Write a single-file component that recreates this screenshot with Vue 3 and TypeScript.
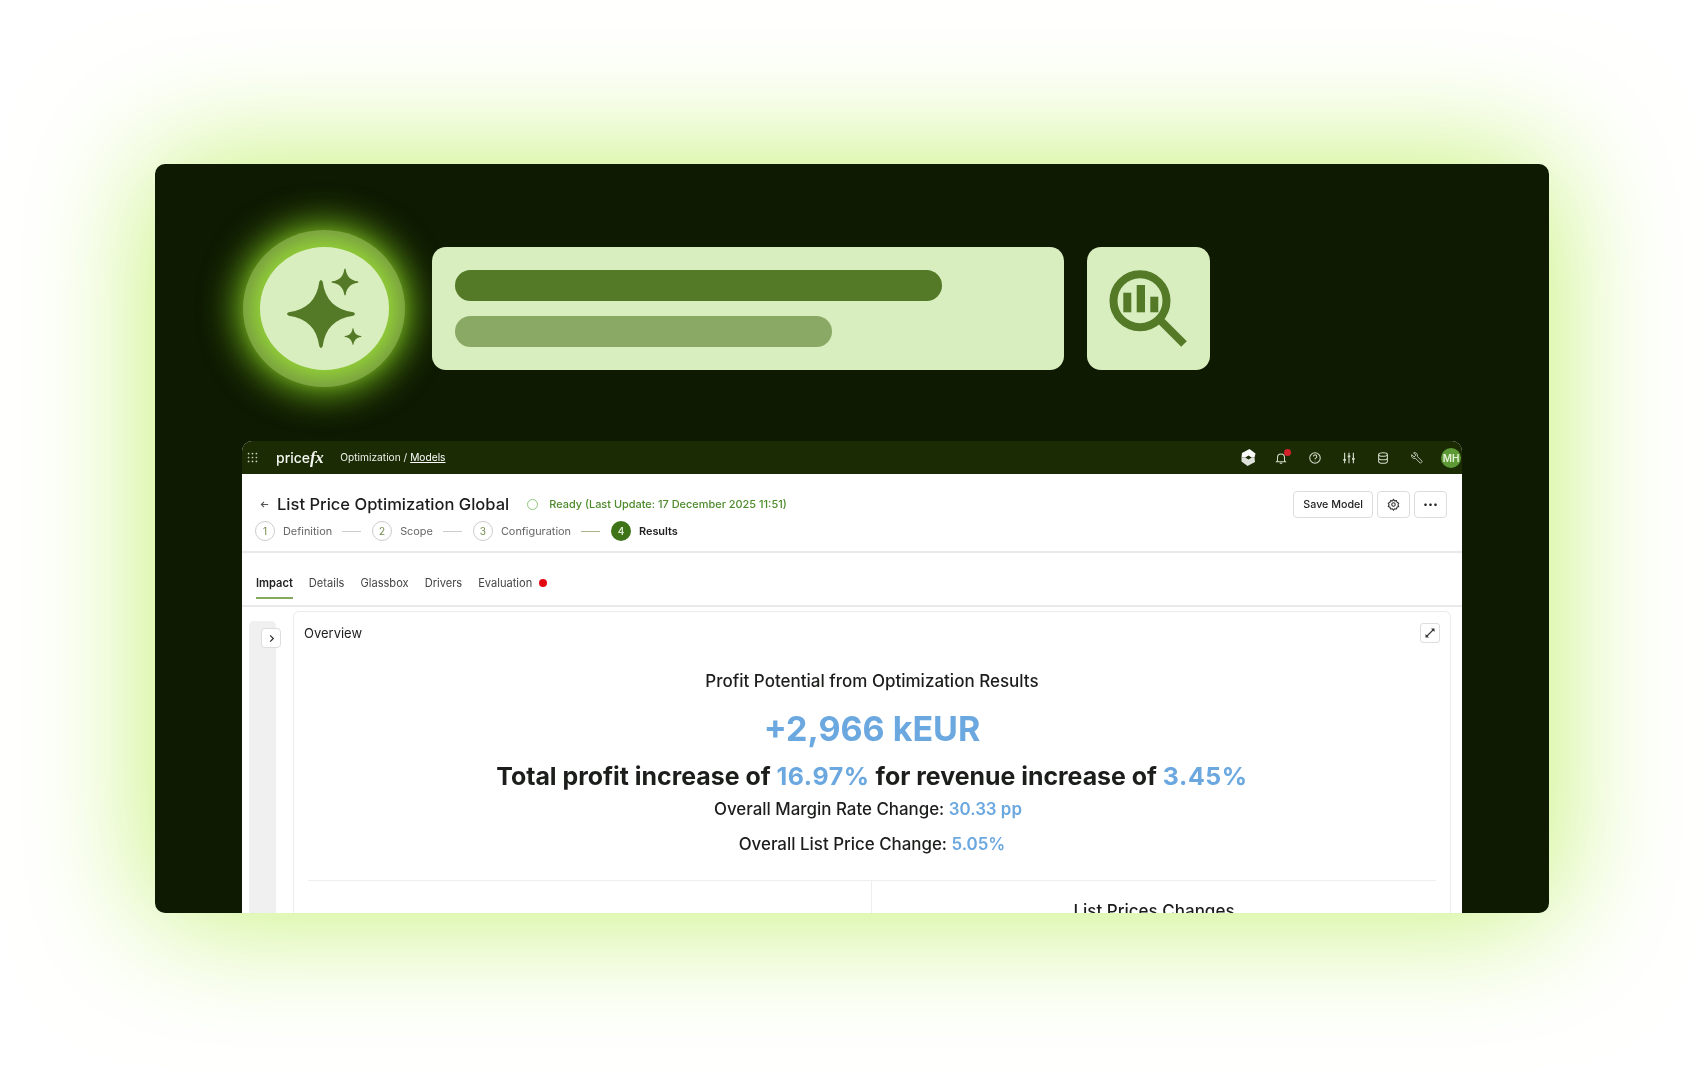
<script setup lang="ts">
// four-pointed star with concave sides, centred on (cx, cy)
function star(cx: number, cy: number, r: number): string {
  const tip = r * 0.05
  const a = r * 0.12
  const b = r * 0.42
  return [
    `M${cx - tip} ${cy - r + tip}`,
    `Q${cx} ${cy - r - tip} ${cx + tip} ${cy - r + tip}`,
    `C${cx + a} ${cy - b} ${cx + b} ${cy - a} ${cx + r - tip} ${cy - tip}`,
    `Q${cx + r + tip} ${cy} ${cx + r - tip} ${cy + tip}`,
    `C${cx + b} ${cy + a} ${cx + a} ${cy + b} ${cx + tip} ${cy + r - tip}`,
    `Q${cx} ${cy + r + tip} ${cx - tip} ${cy + r - tip}`,
    `C${cx - a} ${cy + b} ${cx - b} ${cy + a} ${cx - r + tip} ${cy + tip}`,
    `Q${cx - r - tip} ${cy} ${cx - r + tip} ${cy - tip}`,
    `C${cx - b} ${cy - a} ${cx - a} ${cy - b} ${cx - tip} ${cy - r + tip}Z`,
  ].join(' ')
}

const stars = [star(61, 67, 34), star(85, 35, 13.5), star(93, 89.5, 8.5)]

const steps = [
  { n: 1, label: 'Definition' },
  { n: 2, label: 'Scope' },
  { n: 3, label: 'Configuration' },
]

const tabs = ['Impact', 'Details', 'Glassbox', 'Drivers', 'Evaluation']
const dots = [2, 7, 12]
</script>

<template>
  <div class="page">
    <div class="panel">
      <div class="hero">
        <div class="orb">
          <div class="orb-inner">
            <svg viewBox="0 0 129 123" width="129" height="123">
              <path v-for="d in stars" :key="d" :d="d" fill="#547a28" />
            </svg>
          </div>
        </div>
        <div class="prompt">
          <div class="bar bar-a"></div>
          <div class="bar bar-b"></div>
        </div>
        <div class="search">
          <svg viewBox="0 0 123 123" width="123" height="123">
            <circle cx="53" cy="53.7" r="26.5" fill="none" stroke="#547a28" stroke-width="8" />
            <line x1="73.5" y1="73.5" x2="97" y2="97" stroke="#547a28" stroke-width="8" />
            <rect x="36.3" y="45.7" width="8" height="19.6" fill="#547a28" />
            <rect x="49.7" y="38" width="8.3" height="27.3" fill="#547a28" />
            <rect x="63.3" y="49.7" width="8" height="15.6" fill="#547a28" />
          </svg>
        </div>
      </div>

      <div class="screen">
        <header class="nav">
          <svg class="grid" viewBox="0 0 14 14" width="11" height="11">
            <template v-for="y in dots" :key="y">
              <circle v-for="x in dots" :key="x" :cx="x" :cy="y" r="1.1" fill="#c9d2bd" />
            </template>
          </svg>
          <div class="logo">price<i>fx</i></div>
          <div class="crumb">Optimization / <u>Models</u></div>
          <div class="nav-icons">
            <svg class="brand" viewBox="0 0 15 17" width="15" height="17">
              <path d="M8.500 0L14.500 4.500 13.500 8.500H.5L1 4z" fill="#fafbf8" />
              <path d="M13.500 8.500L14 13 6.500 17 .5 12.500V8.500z" fill="#dfe2da" />
              <path d="M4.300 8.500L7.500 6.500 10.700 8.500 7.500 10.500z" fill="#1b2c05" />
            </svg>
            <span class="bell">
              <svg viewBox="0 0 16 16" width="14" height="14" fill="none" stroke="#d5dccb" stroke-width="1.2">
                <path d="M4 11V7.500a4 4 0 018 0V11l1 1.200H3zM6.600 14h2.800" />
              </svg>
              <b></b>
            </span>
            <svg viewBox="0 0 16 16" width="14" height="14" fill="none" stroke="#d5dccb" stroke-width="1.2">
              <circle cx="8" cy="8" r="6" />
              <path d="M6.200 6.400a1.900 1.900 0 113 1.500c-.8.500-1.200.9-1.200 1.600M8 11v.6" />
            </svg>
            <svg viewBox="0 0 16 16" width="14" height="14" fill="none" stroke="#d5dccb" stroke-width="1.3">
              <path d="M3 2v12M8 2v12M13 2v12" />
              <path d="M1.500 10h3M6.500 6h3M11.500 9h3" stroke-width="2" />
            </svg>
            <svg viewBox="0 0 16 16" width="14" height="14" fill="none" stroke="#d5dccb" stroke-width="1.2">
              <ellipse cx="8" cy="4" rx="5" ry="2" />
              <path d="M3 4v8c0 1.100 2.200 2 5 2s5-.9 5-2V4M3 8c0 1.100 2.200 2 5 2s5-.9 5-2" />
            </svg>
            <svg viewBox="0 0 16 16" width="14" height="14" fill="none" stroke="#d5dccb" stroke-width="1">
              <path d="M2 4.200L4.600 6.800 6.700 4.700 4.100 2.100a3.200 3.200 0 014.200 4.100L14 11.900 11.900 14 6.200 8.300A3.200 3.200 0 012 4.200z" />
            </svg>
            <div class="avatar">MH</div>
          </div>
        </header>

        <section class="head">
          <div class="head-top">
            <div class="title-row">
              <svg viewBox="0 0 10 10" width="9" height="9" fill="none" stroke="#555" stroke-width="1.2">
                <path d="M9 5H1.500M4.500 2L1.500 5l3 3" />
              </svg>
              <h1>List Price Optimization Global</h1>
              <span class="status-dot"></span>
              <span class="status">Ready (Last Update: 17 December 2025 11:51)</span>
            </div>
            <div class="actions">
              <button class="btn">Save Model</button>
              <button class="btn square">
                <svg viewBox="0 0 24 24" width="13" height="13" fill="none" stroke="#333" stroke-width="2">
                  <circle cx="12" cy="12" r="3.200" />
                  <path d="M12 2.500l2 2.800 3.400-.5 1.200 3.200 3 1.700-1.300 3 1.300 3-3 1.400-1.200 3.200-3.400-.5-2 2.700-2-2.700-3.400.5-1.200-3.200-3-1.400 1.300-3-1.300-3 3-1.700 1.200-3.200 3.400.5z" />
                </svg>
              </button>
              <button class="btn square dots">···</button>
            </div>
          </div>
          <div class="steps">
            <template v-for="s in steps" :key="s.n">
              <span class="num">{{ s.n }}</span>
              <span class="step-label">{{ s.label }}</span>
              <span class="dash" :class="{ last: s.n === 3 }"></span>
            </template>
            <span class="num active">4</span>
            <span class="step-label current">Results</span>
          </div>
        </section>

        <nav class="tabs">
          <span v-for="(t, i) in tabs" :key="t" class="tab" :class="{ on: i === 0 }">{{ t }}</span>
          <span class="alert-dot"></span>
        </nav>

        <div class="body">
          <aside class="side">
            <button class="toggle">
              <svg viewBox="0 0 10 10" width="9" height="9" fill="none" stroke="#333" stroke-width="1.400">
                <path d="M3.500 1.500L7 5 3.500 8.500" />
              </svg>
            </button>
          </aside>
          <div class="card">
            <div class="card-head">
              <span>Overview</span>
              <button class="expand">
                <svg viewBox="0 0 12 12" width="12" height="12" fill="none" stroke="#333" stroke-width="1.100">
                  <path d="M2.500 9.500l7-7" />
                  <path d="M7 1.500h3.500V5zM1.500 7v3.500H5z" fill="#333" stroke="none" />
                </svg>
              </button>
            </div>
            <h2>Profit Potential from Optimization Results</h2>
            <div class="big">+2,966 kEUR</div>
            <div class="total">Total profit increase of <em>16.97%</em> for revenue increase of <em>3.45%</em></div>
            <div class="line first">Overall Margin Rate Change: <em>30.33 pp</em></div>
            <div class="line second">Overall List Price Change: <em>5.05%</em></div>
            <div class="split">
              <div class="col"></div>
              <div class="col right">List Prices Changes</div>
            </div>
          </div>
        </div>
      </div>
    </div>
  </div>
</template>

<style>
html, body {
  margin: 0;
  background: #fff;
}
</style>

<style scoped>
.page {
  width: 1704px;
  height: 1080px;
  padding: 164px 155px 167px;
  box-sizing: border-box;
  overflow: hidden;
  font-family: Inter, "Liberation Sans", sans-serif;
}

.panel {
  height: 749px;
  background: #0e1a02;
  border-radius: 10px;
  box-shadow: 0 0 130px 5px #c4f173;
  overflow: hidden;
  display: flex;
  flex-direction: column;
  padding-left: 87px;
}

/* hero row */
.hero {
  display: flex;
  align-items: center;
  margin: 66px 0 0 1px;
  height: 157px;
  flex-shrink: 0;
}

.orb {
  width: 162px;
  height: 157px;
  border-radius: 50%;
  background: #789e42;
  box-shadow: 0 0 34px 8px rgba(125, 195, 30, 0.85);
  display: flex;
  align-items: center;
  justify-content: center;
  flex-shrink: 0;
}

.orb-inner {
  width: 129px;
  height: 123px;
  border-radius: 50%;
  background: #d9eebf;
  box-shadow: 0 0 18px 8px #93d136;
  display: flex;
}

.prompt {
  margin-left: 27px;
  width: 632px;
  height: 123px;
  box-sizing: border-box;
  padding: 23px;
  background: #d9eebf;
  border-radius: 14px;
  display: flex;
  flex-direction: column;
  gap: 15px;
}

.bar {
  height: 31px;
  border-radius: 16px;
}
.bar-a { width: 487px; background: #547a28; }
.bar-b { width: 377px; background: #8aa965; }

.search {
  margin-left: 23px;
  width: 123px;
  height: 123px;
  background: #d9eebf;
  border-radius: 14px;
  display: flex;
}

/* product screenshot, slightly soft like the resampled original */
.screen {
  margin-top: 54px;
  width: 1220px;
  flex: 1;
  background: #fff;
  border-radius: 10px 10px 0 0;
  overflow: hidden;
  display: flex;
  flex-direction: column;
  color: #1c1e1c;
  filter: blur(0.4px);
}

.nav {
  height: 33px;
  flex-shrink: 0;
  background: #1b2c05;
  display: flex;
  align-items: center;
  padding: 0 1px 0 5px;
  color: #eef0ea;
  font-size: 10.2px;
}

.logo {
  margin-left: 18px;
  font-size: 14px;
  font-weight: 500;
  color: #f4f6f0;
}
.logo i {
  font-family: "Liberation Serif", serif;
  font-size: 17px;
  font-weight: 700;
  letter-spacing: -0.5px;
}

.crumb {
  margin: 0 0 2px 17px;
}
.crumb u { color: #fff; }

.nav-icons {
  margin-left: auto;
  display: flex;
  align-items: center;
  gap: 20px;
}

.brand { margin-right: -2px; }

.bell {
  position: relative;
  display: flex;
}
.bell b {
  position: absolute;
  top: -2px;
  right: -3px;
  width: 7px;
  height: 7px;
  border-radius: 50%;
  background: #d3202a;
}

.avatar {
  width: 20px;
  height: 20px;
  margin-left: -3px;
  border-radius: 50%;
  background: #5d9a35;
  color: #e4f0d8;
  font-size: 10px;
  font-weight: 600;
  display: flex;
  align-items: center;
  justify-content: center;
}

.head {
  flex-shrink: 0;
  height: 79px;
  box-sizing: border-box;
  padding: 16px 15px 0 13px;
  border-bottom: 2px solid #e9e9e9;
}

.head-top {
  display: flex;
  justify-content: space-between;
  align-items: center;
  height: 28px;
}

.title-row {
  display: flex;
  align-items: center;
  padding-left: 5px;
}

h1 {
  margin: 0 0 0 8px;
  font-size: 16.55px;
  font-weight: 500;
  white-space: nowrap;
}

.status-dot {
  margin-left: 18px;
  width: 9px;
  height: 9px;
  border: 1.5px solid #8fc77a;
  border-radius: 50%;
}

.status {
  margin-left: 11px;
  font-size: 10.95px;
  font-weight: 500;
  color: #4c8a2a;
}

.actions {
  display: flex;
  gap: 4px;
}

.btn {
  height: 27px;
  padding: 0 9px;
  background: #fff;
  border: 1px solid #dcdcdc;
  border-radius: 4px;
  font: 500 10.7px Inter, "Liberation Sans", sans-serif;
  color: #222;
  display: flex;
  align-items: center;
  justify-content: center;
}
.square {
  width: 33px;
  padding: 0;
}
.dots {
  font-size: 15px;
  font-weight: 700;
}

.steps {
  display: flex;
  align-items: center;
  margin-top: 2px;
  height: 22px;
  font-size: 10.9px;
}

.num {
  width: 18px;
  height: 18px;
  border: 1px solid #ccc;
  border-radius: 50%;
  color: #6f8a4a;
  display: flex;
  align-items: center;
  justify-content: center;
  font-size: 10px;
  flex-shrink: 0;
}
.num.active {
  width: 20px;
  height: 20px;
  border: none;
  background: #3f7318;
  color: #dfe9d2;
  font-weight: 600;
}

.step-label {
  margin-left: 8px;
  color: #666;
}
.step-label.current {
  color: #222;
  font-weight: 600;
}

.dash {
  width: 19px;
  height: 1px;
  margin: 0 11px 0 10px;
  background: #ccc;
}
.dash.last {
  background: #a9b48f;
}

.tabs {
  flex-shrink: 0;
  height: 54px;
  box-sizing: border-box;
  padding: 0 14px;
  border-bottom: 2px solid #e9e9e9;
  display: flex;
  align-items: flex-start;
  gap: 16px;
  font-size: 11.1px;
  color: #444;
}

.tab {
  height: 46px;
  padding-top: 13px;
  box-sizing: border-box;
  display: flex;
  align-items: center;
}
.tab.on {
  color: #222;
  font-weight: 600;
  box-shadow: inset 0 -2px 0 #83aa5e;
}

.alert-dot {
  width: 8px;
  height: 8px;
  margin: 26px 0 0 -9px;
  border-radius: 50%;
  background: #e30613;
}

.body {
  flex: 1;
  display: flex;
  padding: 4px 11px 0 7px;
  min-height: 0;
}

.side {
  width: 27px;
  margin-top: 10px;
  background: #f0f0f0;
  border-radius: 5px 5px 0 0;
  position: relative;
  flex-shrink: 0;
}

.toggle {
  position: absolute;
  top: 7px;
  left: 12px;
  width: 20px;
  height: 20px;
  padding: 0;
  background: #fff;
  border: 1px solid #ddd;
  border-radius: 4px;
  display: flex;
  align-items: center;
  justify-content: center;
}

.card {
  flex: 1;
  margin-left: 17px;
  border: 1px solid #ececec;
  border-bottom: none;
  border-radius: 6px 6px 0 0;
  text-align: center;
  display: flex;
  flex-direction: column;
  min-width: 0;
}

.card-head {
  display: flex;
  justify-content: space-between;
  align-items: center;
  padding: 11px 10px 0 10px;
  font-size: 13px;
  text-align: left;
}

.expand {
  width: 20px;
  height: 20px;
  padding: 0;
  background: #fff;
  border: 1px solid #ddd;
  border-radius: 3px;
  display: flex;
  align-items: center;
  justify-content: center;
}

h2 {
  margin: 27px 0 0;
  font-size: 17px;
  font-weight: 500;
  line-height: 22px;
}

.big {
  margin-top: 17px;
  font-size: 34px;
  font-weight: 700;
  line-height: 40px;
  color: #6ca8e0;
}

.total {
  margin-top: 10px;
  font-size: 24.9px;
  font-weight: 700;
  line-height: 34px;
}
.total em {
  letter-spacing: 0.6px;
}

.line {
  font-size: 16.9px;
  font-weight: 500;
  line-height: 24px;
}
.line em { font-weight: 600; }
.line.first {
  margin-top: 4px;
  padding-right: 8px;
}
.line.second { margin-top: 11px; }

em {
  font-style: normal;
  color: #6ca8e0;
}

.split {
  margin: 24px 14px 0 14px;
  border-top: 1px solid #eee;
  display: flex;
  flex: 1;
}
.col { flex: 0 0 563px; }
.col.right {
  flex: 1;
  border-left: 1px solid #eee;
  padding-top: 19px;
  font-size: 17px;
  font-weight: 500;
  line-height: 22px;
}
</style>
